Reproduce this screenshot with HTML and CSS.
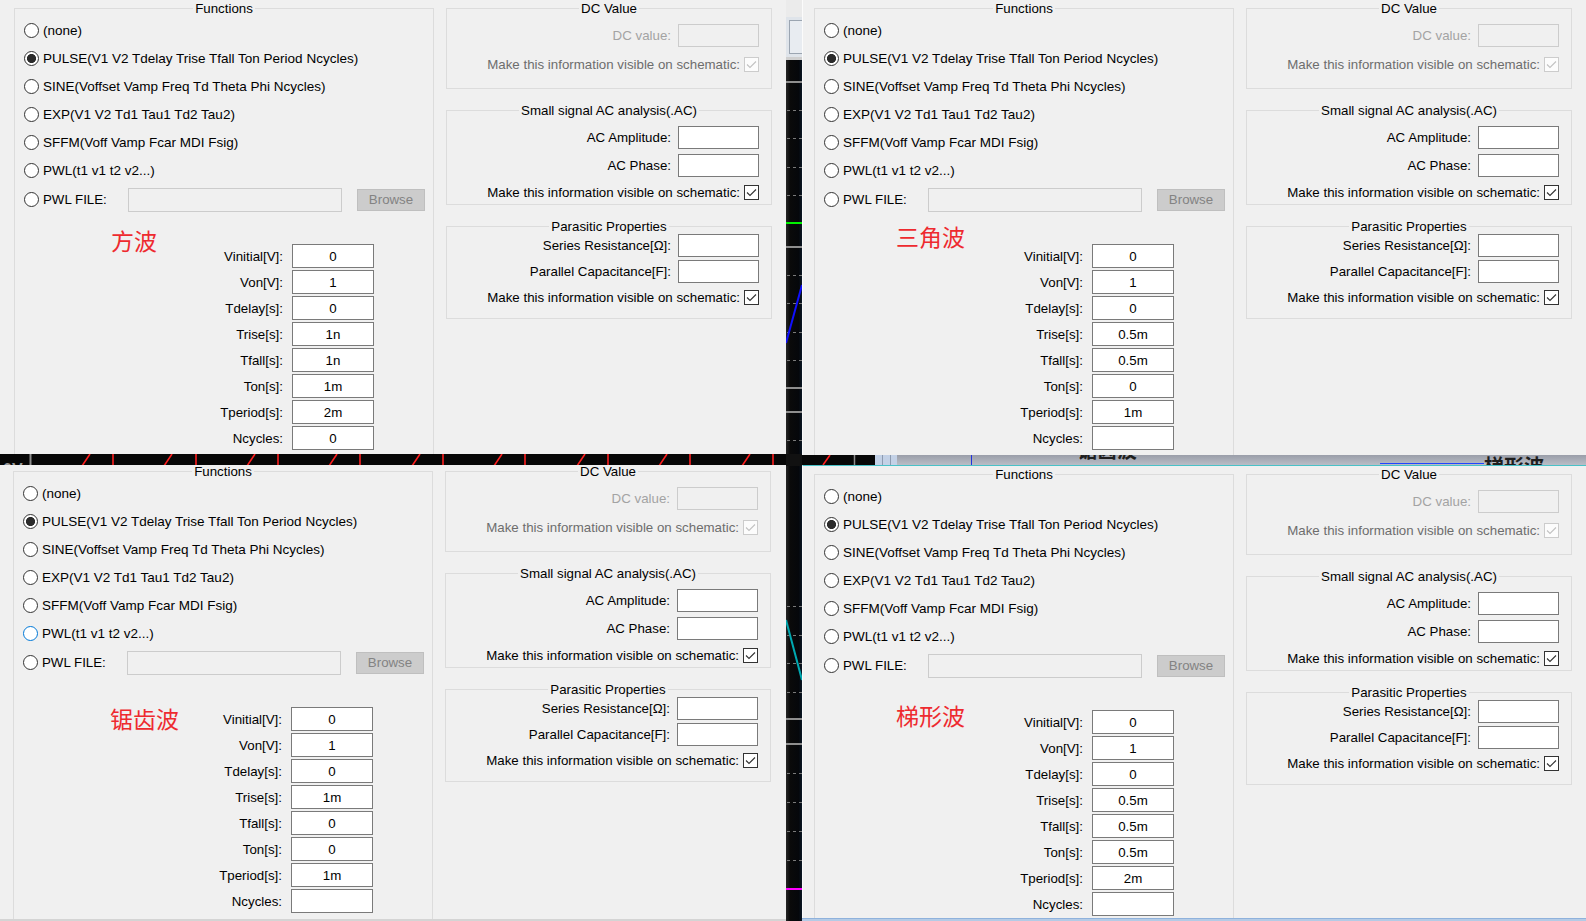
FILE: index.html
```html
<!DOCTYPE html>
<html lang="zh-CN">
<head>
<meta charset="utf-8">
<title>Voltage source waveforms</title>
<link rel="stylesheet" href="styles.css">
</head>
<body>
<div class="screen">
  <div class="col col-left">
    <section class="panel panel-tl">
      <div class="dialog dlg-tl">
        <div class="group functions">
          <div class="gtitle">Functions</div>
          <div class="radio-list">
            <div class="opt"><span class="radio"></span>(none)</div>
            <div class="opt"><span class="radio on"></span>PULSE(V1 V2 Tdelay Trise Tfall Ton Period Ncycles)</div>
            <div class="opt"><span class="radio"></span>SINE(Voffset Vamp Freq Td Theta Phi Ncycles)</div>
            <div class="opt"><span class="radio"></span>EXP(V1 V2 Td1 Tau1 Td2 Tau2)</div>
            <div class="opt"><span class="radio"></span>SFFM(Voff Vamp Fcar MDI Fsig)</div>
            <div class="opt"><span class="radio"></span>PWL(t1 v1 t2 v2...)</div>
            <div class="opt opt-file"><span class="radio"></span><span class="file-label">PWL FILE:</span><span class="edit disabled file-edit"></span><span class="btn">Browse</span></div>
          </div>
          <div class="params">
            <div class="param"><span class="plabel">Vinitial[V]:</span><span class="edit pval">0</span></div>
            <div class="param"><span class="plabel">Von[V]:</span><span class="edit pval">1</span></div>
            <div class="param"><span class="plabel">Tdelay[s]:</span><span class="edit pval">0</span></div>
            <div class="param"><span class="plabel">Trise[s]:</span><span class="edit pval">1n</span></div>
            <div class="param"><span class="plabel">Tfall[s]:</span><span class="edit pval">1n</span></div>
            <div class="param"><span class="plabel">Ton[s]:</span><span class="edit pval">1m</span></div>
            <div class="param"><span class="plabel">Tperiod[s]:</span><span class="edit pval">2m</span></div>
            <div class="param"><span class="plabel">Ncycles:</span><span class="edit pval">0</span></div>
          </div>
          <div class="note note-tl">方波</div>
        </div>
        <div class="side">
          <div class="group box box-dc">
            <div class="gtitle">DC Value</div>
            <div class="row row-first"><span class="lbl lbl-dis">DC value:</span><span class="edit disabled sedit"></span></div>
            <div class="row row-check-dc"><span class="lbl lbl-gray">Make this information visible on schematic:</span><span class="check disabled"><svg viewBox="0 0 13 13"><polyline points="2,6.5 5,9.5 11,3.5"/></svg></span></div>
          </div>
          <div class="group box box-ac">
            <div class="gtitle">Small signal AC analysis(.AC)</div>
            <div class="row row-first"><span class="lbl">AC Amplitude:</span><span class="edit sedit"></span></div>
            <div class="row row-second"><span class="lbl">AC Phase:</span><span class="edit sedit"></span></div>
            <div class="row row-check-ac"><span class="lbl">Make this information visible on schematic:</span><span class="check"><svg viewBox="0 0 13 13"><polyline points="2,6.5 5,9.5 11,3.5"/></svg></span></div>
          </div>
          <div class="group box box-par">
            <div class="gtitle">Parasitic Properties</div>
            <div class="row row-tight"><span class="lbl">Series Resistance[Ω]:</span><span class="edit sedit"></span></div>
            <div class="row row-third"><span class="lbl">Parallel Capacitance[F]:</span><span class="edit sedit"></span></div>
            <div class="row row-check-par"><span class="lbl">Make this information visible on schematic:</span><span class="check"><svg viewBox="0 0 13 13"><polyline points="2,6.5 5,9.5 11,3.5"/></svg></span></div>
          </div>
        </div>
      </div>
    </section>

    <div class="seam seam-left">
      <svg width="786" height="11" viewBox="0 0 786 11">
        <rect width="786" height="11" fill="#070707"/>
        <line x1="30.5" y1="0" x2="30.5" y2="11" stroke="#8c8c8c" stroke-width="2"/>
        <text x="3" y="21" fill="#9a9a9a" font-size="16" font-weight="bold" font-family="Liberation Sans, sans-serif">0V</text>
        <g stroke="#ff1f1f" stroke-width="1.6">
          <line x1="113" y1="0" x2="113" y2="11"/><line x1="196" y1="0" x2="196" y2="11"/>
          <line x1="278" y1="0" x2="278" y2="11"/><line x1="360" y1="0" x2="360" y2="11"/>
          <line x1="443" y1="0" x2="443" y2="11"/><line x1="525" y1="0" x2="525" y2="11"/>
          <line x1="608" y1="0" x2="608" y2="11"/><line x1="690" y1="0" x2="690" y2="11"/>
          <line x1="773" y1="0" x2="773" y2="11"/>
          <line x1="82" y1="12" x2="90" y2="0"/><line x1="164" y1="12" x2="172" y2="0"/>
          <line x1="247" y1="12" x2="255" y2="0"/><line x1="329" y1="12" x2="337" y2="0"/>
          <line x1="412" y1="12" x2="420" y2="0"/><line x1="494" y1="12" x2="502" y2="0"/>
          <line x1="577" y1="12" x2="585" y2="0"/><line x1="659" y1="12" x2="667" y2="0"/>
          <line x1="742" y1="12" x2="750" y2="0"/>
        </g>
      </svg>
    </div>

    <section class="panel panel-bl">
      <div class="dialog dlg-bl">
        <div class="group functions">
          <div class="gtitle">Functions</div>
          <div class="radio-list">
            <div class="opt"><span class="radio"></span>(none)</div>
            <div class="opt"><span class="radio on"></span>PULSE(V1 V2 Tdelay Trise Tfall Ton Period Ncycles)</div>
            <div class="opt"><span class="radio"></span>SINE(Voffset Vamp Freq Td Theta Phi Ncycles)</div>
            <div class="opt"><span class="radio"></span>EXP(V1 V2 Td1 Tau1 Td2 Tau2)</div>
            <div class="opt"><span class="radio"></span>SFFM(Voff Vamp Fcar MDI Fsig)</div>
            <div class="opt"><span class="radio hover"></span>PWL(t1 v1 t2 v2...)</div>
            <div class="opt opt-file"><span class="radio"></span><span class="file-label">PWL FILE:</span><span class="edit disabled file-edit"></span><span class="btn">Browse</span></div>
          </div>
          <div class="params">
            <div class="param"><span class="plabel">Vinitial[V]:</span><span class="edit pval">0</span></div>
            <div class="param"><span class="plabel">Von[V]:</span><span class="edit pval">1</span></div>
            <div class="param"><span class="plabel">Tdelay[s]:</span><span class="edit pval">0</span></div>
            <div class="param"><span class="plabel">Trise[s]:</span><span class="edit pval">1m</span></div>
            <div class="param"><span class="plabel">Tfall[s]:</span><span class="edit pval">0</span></div>
            <div class="param"><span class="plabel">Ton[s]:</span><span class="edit pval">0</span></div>
            <div class="param"><span class="plabel">Tperiod[s]:</span><span class="edit pval">1m</span></div>
            <div class="param"><span class="plabel">Ncycles:</span><span class="edit pval"></span></div>
          </div>
          <div class="note note-bl">锯齿波</div>
        </div>
        <div class="side">
          <div class="group box box-dc">
            <div class="gtitle">DC Value</div>
            <div class="row row-first"><span class="lbl lbl-dis">DC value:</span><span class="edit disabled sedit"></span></div>
            <div class="row row-check-dc"><span class="lbl lbl-gray">Make this information visible on schematic:</span><span class="check disabled"><svg viewBox="0 0 13 13"><polyline points="2,6.5 5,9.5 11,3.5"/></svg></span></div>
          </div>
          <div class="group box box-ac">
            <div class="gtitle">Small signal AC analysis(.AC)</div>
            <div class="row row-first"><span class="lbl">AC Amplitude:</span><span class="edit sedit"></span></div>
            <div class="row row-second"><span class="lbl">AC Phase:</span><span class="edit sedit"></span></div>
            <div class="row row-check-ac"><span class="lbl">Make this information visible on schematic:</span><span class="check"><svg viewBox="0 0 13 13"><polyline points="2,6.5 5,9.5 11,3.5"/></svg></span></div>
          </div>
          <div class="group box box-par">
            <div class="gtitle">Parasitic Properties</div>
            <div class="row row-tight"><span class="lbl">Series Resistance[Ω]:</span><span class="edit sedit"></span></div>
            <div class="row row-third"><span class="lbl">Parallel Capacitance[F]:</span><span class="edit sedit"></span></div>
            <div class="row row-check-par"><span class="lbl">Make this information visible on schematic:</span><span class="check"><svg viewBox="0 0 13 13"><polyline points="2,6.5 5,9.5 11,3.5"/></svg></span></div>
          </div>
        </div>
      </div>
    </section>
  </div>

  <div class="strip">
    <svg width="16" height="921" viewBox="0 0 16 921">
      <defs>
        <linearGradient id="stripg" x1="0" x2="1" y1="0" y2="0">
          <stop offset="0" stop-color="#262626"/>
          <stop offset="0.25" stop-color="#0a0a0a"/>
          <stop offset="0.8" stop-color="#05070b"/>
          <stop offset="1" stop-color="#0b1826"/>
        </linearGradient>
      </defs>
      <rect width="16" height="921" fill="url(#stripg)"/>
      <rect width="16" height="17" fill="#ebebeb"/>
      <rect y="17" width="16" height="40" fill="#dfe4ea"/>
      <rect x="3.5" y="20.5" width="14" height="33" fill="#e8ecf1" stroke="#9ba5b1"/>
      <rect y="57" width="16" height="3" fill="#cfcfcf"/>
      <g stroke="#8e8e8e" stroke-width="2">
        <line x1="0" y1="82" x2="16" y2="82"/>
        <line x1="0" y1="247" x2="16" y2="247"/>
        <line x1="0" y1="388" x2="16" y2="388"/>
        <line x1="0" y1="412" x2="16" y2="412"/>
        <line x1="0" y1="719" x2="16" y2="719"/>
        <line x1="0" y1="744" x2="16" y2="744"/>
      </g>
      <g stroke="#7a7a7a" stroke-width="1" stroke-dasharray="3 3">
        <line x1="1" y1="110.5" x2="16" y2="110.5"/><line x1="1" y1="138.5" x2="16" y2="138.5"/>
        <line x1="1" y1="167.5" x2="16" y2="167.5"/><line x1="1" y1="195.5" x2="16" y2="195.5"/>
        <line x1="1" y1="275.5" x2="16" y2="275.5"/><line x1="1" y1="303.5" x2="16" y2="303.5"/>
        <line x1="1" y1="332.5" x2="16" y2="332.5"/><line x1="1" y1="360.5" x2="16" y2="360.5"/>
        <line x1="1" y1="440.5" x2="16" y2="440.5"/><line x1="1" y1="606.5" x2="16" y2="606.5"/>
        <line x1="1" y1="635.5" x2="16" y2="635.5"/><line x1="1" y1="663.5" x2="16" y2="663.5"/>
        <line x1="1" y1="692.5" x2="16" y2="692.5"/><line x1="1" y1="773.5" x2="16" y2="773.5"/>
        <line x1="1" y1="802.5" x2="16" y2="802.5"/><line x1="1" y1="831.5" x2="16" y2="831.5"/>
        <line x1="1" y1="860.5" x2="16" y2="860.5"/>
      </g>
      <line x1="0" y1="223" x2="16" y2="223" stroke="#00f000" stroke-width="2"/>
      <line x1="16" y1="285" x2="0" y2="343" stroke="#1010ff" stroke-width="2"/>
      <line x1="0" y1="620" x2="16" y2="680" stroke="#00a8b0" stroke-width="2"/>
      <line x1="0" y1="889" x2="16" y2="889" stroke="#ff00ff" stroke-width="2"/>
      <line x1="0" y1="460" x2="16" y2="460" stroke="#111" stroke-width="12"/>
    </svg>
  </div>

  <div class="col col-right">
    <section class="panel panel-tr">
      <div class="dialog dlg-tr">
        <div class="group functions">
          <div class="gtitle">Functions</div>
          <div class="radio-list">
            <div class="opt"><span class="radio"></span>(none)</div>
            <div class="opt"><span class="radio on"></span>PULSE(V1 V2 Tdelay Trise Tfall Ton Period Ncycles)</div>
            <div class="opt"><span class="radio"></span>SINE(Voffset Vamp Freq Td Theta Phi Ncycles)</div>
            <div class="opt"><span class="radio"></span>EXP(V1 V2 Td1 Tau1 Td2 Tau2)</div>
            <div class="opt"><span class="radio"></span>SFFM(Voff Vamp Fcar MDI Fsig)</div>
            <div class="opt"><span class="radio"></span>PWL(t1 v1 t2 v2...)</div>
            <div class="opt opt-file"><span class="radio"></span><span class="file-label">PWL FILE:</span><span class="edit disabled file-edit"></span><span class="btn">Browse</span></div>
          </div>
          <div class="params">
            <div class="param"><span class="plabel">Vinitial[V]:</span><span class="edit pval">0</span></div>
            <div class="param"><span class="plabel">Von[V]:</span><span class="edit pval">1</span></div>
            <div class="param"><span class="plabel">Tdelay[s]:</span><span class="edit pval">0</span></div>
            <div class="param"><span class="plabel">Trise[s]:</span><span class="edit pval">0.5m</span></div>
            <div class="param"><span class="plabel">Tfall[s]:</span><span class="edit pval">0.5m</span></div>
            <div class="param"><span class="plabel">Ton[s]:</span><span class="edit pval">0</span></div>
            <div class="param"><span class="plabel">Tperiod[s]:</span><span class="edit pval">1m</span></div>
            <div class="param"><span class="plabel">Ncycles:</span><span class="edit pval"></span></div>
          </div>
          <div class="note note-tr">三角波</div>
        </div>
        <div class="side">
          <div class="group box box-dc">
            <div class="gtitle">DC Value</div>
            <div class="row row-first"><span class="lbl lbl-dis">DC value:</span><span class="edit disabled sedit"></span></div>
            <div class="row row-check-dc"><span class="lbl lbl-gray">Make this information visible on schematic:</span><span class="check disabled"><svg viewBox="0 0 13 13"><polyline points="2,6.5 5,9.5 11,3.5"/></svg></span></div>
          </div>
          <div class="group box box-ac">
            <div class="gtitle">Small signal AC analysis(.AC)</div>
            <div class="row row-first"><span class="lbl">AC Amplitude:</span><span class="edit sedit"></span></div>
            <div class="row row-second"><span class="lbl">AC Phase:</span><span class="edit sedit"></span></div>
            <div class="row row-check-ac"><span class="lbl">Make this information visible on schematic:</span><span class="check"><svg viewBox="0 0 13 13"><polyline points="2,6.5 5,9.5 11,3.5"/></svg></span></div>
          </div>
          <div class="group box box-par">
            <div class="gtitle">Parasitic Properties</div>
            <div class="row row-tight"><span class="lbl">Series Resistance[Ω]:</span><span class="edit sedit"></span></div>
            <div class="row row-third"><span class="lbl">Parallel Capacitance[F]:</span><span class="edit sedit"></span></div>
            <div class="row row-check-par"><span class="lbl">Make this information visible on schematic:</span><span class="check"><svg viewBox="0 0 13 13"><polyline points="2,6.5 5,9.5 11,3.5"/></svg></span></div>
          </div>
        </div>
      </div>
    </section>

    <div class="seam seam-right">
      <svg width="784" height="10" viewBox="0 0 784 10">
        <defs>
          <linearGradient id="bandg" x1="0" x2="0" y1="0" y2="1">
            <stop offset="0" stop-color="#9a9ea9"/>
            <stop offset="1" stop-color="#b9bdc6"/>
          </linearGradient>
        </defs>
        <rect width="784" height="10" fill="url(#bandg)"/>
        <rect width="73" height="10" fill="#070707"/>
        <line x1="21" y1="10" x2="28" y2="0" stroke="#ff1f1f" stroke-width="1.6"/>
        <line x1="52.5" y1="0" x2="52.5" y2="10" stroke="#8c8c8c" stroke-width="1.5"/>
        <rect x="73" width="22" height="10" fill="#c3d1e6"/>
        <line x1="80.5" y1="0" x2="80.5" y2="10" stroke="#8d9bb0"/>
        <line x1="88.5" y1="0" x2="88.5" y2="10" stroke="#8d9bb0"/>
        <line x1="169.5" y1="0" x2="169.5" y2="10" stroke="#2233dd"/>
        <text x="275" y="3" fill="#1e1e1e" font-size="20" font-weight="bold" font-family="Noto Sans CJK SC, sans-serif">锯齿波</text>
        <line x1="578" y1="8.5" x2="682" y2="8.5" stroke="#2244ff"/>
        <text x="682" y="19" fill="#1e1e1e" font-size="20" font-weight="bold" font-family="Noto Sans CJK SC, sans-serif">梯形波</text>
      </svg>
    </div>

    <section class="panel panel-br">
      <div class="dialog dlg-br">
        <div class="group functions">
          <div class="gtitle">Functions</div>
          <div class="radio-list">
            <div class="opt"><span class="radio"></span>(none)</div>
            <div class="opt"><span class="radio on"></span>PULSE(V1 V2 Tdelay Trise Tfall Ton Period Ncycles)</div>
            <div class="opt"><span class="radio"></span>SINE(Voffset Vamp Freq Td Theta Phi Ncycles)</div>
            <div class="opt"><span class="radio"></span>EXP(V1 V2 Td1 Tau1 Td2 Tau2)</div>
            <div class="opt"><span class="radio"></span>SFFM(Voff Vamp Fcar MDI Fsig)</div>
            <div class="opt"><span class="radio"></span>PWL(t1 v1 t2 v2...)</div>
            <div class="opt opt-file"><span class="radio"></span><span class="file-label">PWL FILE:</span><span class="edit disabled file-edit"></span><span class="btn">Browse</span></div>
          </div>
          <div class="params">
            <div class="param"><span class="plabel">Vinitial[V]:</span><span class="edit pval">0</span></div>
            <div class="param"><span class="plabel">Von[V]:</span><span class="edit pval">1</span></div>
            <div class="param"><span class="plabel">Tdelay[s]:</span><span class="edit pval">0</span></div>
            <div class="param"><span class="plabel">Trise[s]:</span><span class="edit pval">0.5m</span></div>
            <div class="param"><span class="plabel">Tfall[s]:</span><span class="edit pval">0.5m</span></div>
            <div class="param"><span class="plabel">Ton[s]:</span><span class="edit pval">0.5m</span></div>
            <div class="param"><span class="plabel">Tperiod[s]:</span><span class="edit pval">2m</span></div>
            <div class="param"><span class="plabel">Ncycles:</span><span class="edit pval"></span></div>
          </div>
          <div class="note note-br">梯形波</div>
        </div>
        <div class="side">
          <div class="group box box-dc">
            <div class="gtitle">DC Value</div>
            <div class="row row-first"><span class="lbl lbl-dis">DC value:</span><span class="edit disabled sedit"></span></div>
            <div class="row row-check-dc"><span class="lbl lbl-gray">Make this information visible on schematic:</span><span class="check disabled"><svg viewBox="0 0 13 13"><polyline points="2,6.5 5,9.5 11,3.5"/></svg></span></div>
          </div>
          <div class="group box box-ac">
            <div class="gtitle">Small signal AC analysis(.AC)</div>
            <div class="row row-first"><span class="lbl">AC Amplitude:</span><span class="edit sedit"></span></div>
            <div class="row row-second"><span class="lbl">AC Phase:</span><span class="edit sedit"></span></div>
            <div class="row row-check-ac"><span class="lbl">Make this information visible on schematic:</span><span class="check"><svg viewBox="0 0 13 13"><polyline points="2,6.5 5,9.5 11,3.5"/></svg></span></div>
          </div>
          <div class="group box box-par">
            <div class="gtitle">Parasitic Properties</div>
            <div class="row row-tight"><span class="lbl">Series Resistance[Ω]:</span><span class="edit sedit"></span></div>
            <div class="row row-third"><span class="lbl">Parallel Capacitance[F]:</span><span class="edit sedit"></span></div>
            <div class="row row-check-par"><span class="lbl">Make this information visible on schematic:</span><span class="check"><svg viewBox="0 0 13 13"><polyline points="2,6.5 5,9.5 11,3.5"/></svg></span></div>
          </div>
        </div>
      </div>
    </section>
    <div class="br-edge"></div>
  </div>
</div>
</body>
</html>
```

FILE: styles.css
```css
* { box-sizing: border-box; }
html, body { margin: 0; padding: 0; }
body {
  width: 1586px;
  height: 921px;
  overflow: hidden;
  background: #060606;
  font-family: "Liberation Sans", Arial, sans-serif;
  font-size: 13.3px;
  color: #000;
}
.screen { display: flex; width: 1586px; height: 921px; }
.col { display: flex; flex-direction: column; flex: none; }
.col-left { width: 786px; }
.col-right { width: 784px; }
.strip { width: 16px; flex: none; line-height: 0; }
.strip svg, .seam svg { display: block; }

.panel { background: #f0f0f0; overflow: hidden; flex: none; }
.panel-tl { height: 454px; }
.panel-bl { height: 456px; border-bottom: 2px solid #d4d4d4; }
.panel-tr { height: 455px; border-left: 1px solid #fbfbfb; }
.panel-br { height: 453px; border-top: 1px solid #48c2c8; border-left: 1px solid #fbfbfb; }
.seam { flex: none; overflow: hidden; }
.seam-left { height: 11px; }
.seam-right { height: 10px; }
.br-edge { height: 3px; background: #b4cbe6; border-top: 1px solid #8fb2dc; }

.dialog { display: flex; align-items: flex-start; width: 800px; }
.dlg-tl { margin: 0; }
.dlg-tr { margin: 0 0 0 -3px; }
.dlg-bl { margin: -2px 0 0 -1px; }
.dlg-br { margin: 0 0 0 -3px; }

.group { border: 1px solid #dcdcdc; }
.gtitle {
  margin: -9px auto 0;
  width: max-content;
  padding: 0 2px;
  height: 17px;
  line-height: 17px;
  background: #f0f0f0;
  white-space: nowrap;
}

/* Functions group */
.functions {
  position: relative;
  margin: 8px 0 0 14px;
  width: 420px;
  height: 449px;
  flex: none;
}
.radio-list { padding-left: 9px; margin-top: -1px; font-size: 13.5px; }
.opt {
  display: flex;
  align-items: center;
  height: 28px;
  white-space: nowrap;
}
.opt-file { height: 31px; font-size: 13.3px; }
.radio {
  flex: none;
  width: 15px;
  height: 15px;
  margin-right: 4px;
  border: 1px solid #333;
  border-radius: 50%;
  background: #fff;
}
.radio.on { background: radial-gradient(circle, #2b2b2b 0 4.2px, #fff 4.9px); }
.radio.hover { border-color: #0078d7; }
.file-label { width: 85px; flex: none; }
.edit {
  display: flex;
  align-items: center;
  justify-content: center;
  border: 1px solid #7a7a7a;
  background: #fff;
  flex: none;
}
.edit.disabled { border-color: #cccccc; background: #f0f0f0; }
.file-edit { width: 214px; height: 24px; }
.btn {
  flex: none;
  width: 68px;
  height: 22px;
  margin-left: 15px;
  display: flex;
  align-items: center;
  justify-content: center;
  background: #cccccc;
  border: 1px solid #bfbfbf;
  color: #838383;
}

.params {
  margin-top: 29px;
  display: flex;
  flex-direction: column;
  gap: 2px;
}
.param { display: flex; align-items: center; height: 24px; }
.plabel { width: 268px; text-align: right; margin-right: 9px; white-space: nowrap; }
.pval { width: 82px; height: 24px; }

.note {
  position: absolute;
  font-family: "Noto Sans CJK SC", "Noto Sans CJK JP", sans-serif;
  font-size: 23px;
  line-height: 23px;
  color: #ee2a2f;
  white-space: nowrap;
}
.note-tl { left: 96px; top: 220px; }
.note-tr { left: 81px; top: 216px; }
.note-bl { left: 96px; top: 235px; }
.note-br { left: 81px; top: 229px; }

/* Right column */
.side { margin-left: 12px; width: 326px; display: flex; flex-direction: column; flex: none; }
.box-dc { margin-top: 8px; padding-bottom: 16px; }
.box-ac { margin-top: 21px; padding-bottom: 4px; }
.box-par { margin-top: 21px; padding-bottom: 13px; }
.row {
  display: flex;
  justify-content: flex-end;
  align-items: center;
  padding-right: 12px;
  white-space: nowrap;
}
.row-first { margin-top: 7px; }
.row-second { margin-top: 5px; }
.row-tight { margin-top: -1px; }
.row-third { margin-top: 3px; }
.row-check-dc { margin-top: 10px; }
.row-check-ac { margin-top: 8px; }
.row-check-par { margin-top: 7px; }
.sedit { width: 81px; height: 23px; margin-left: 7px; }
.lbl-dis { color: #a3a3a3; }
.lbl-gray { color: #6d6d6d; }
.check {
  flex: none;
  width: 15px;
  height: 15px;
  margin-left: 4px;
  border: 1px solid #333;
  background: #fff;
  line-height: 0;
}
.check svg { width: 13px; height: 13px; display: block; }
.check polyline { fill: none; stroke: #333; stroke-width: 1.1; }
.check.disabled { border-color: #cccccc; background: #fcfcfc; }
.check.disabled polyline { stroke: #c2c2c2; }
```
